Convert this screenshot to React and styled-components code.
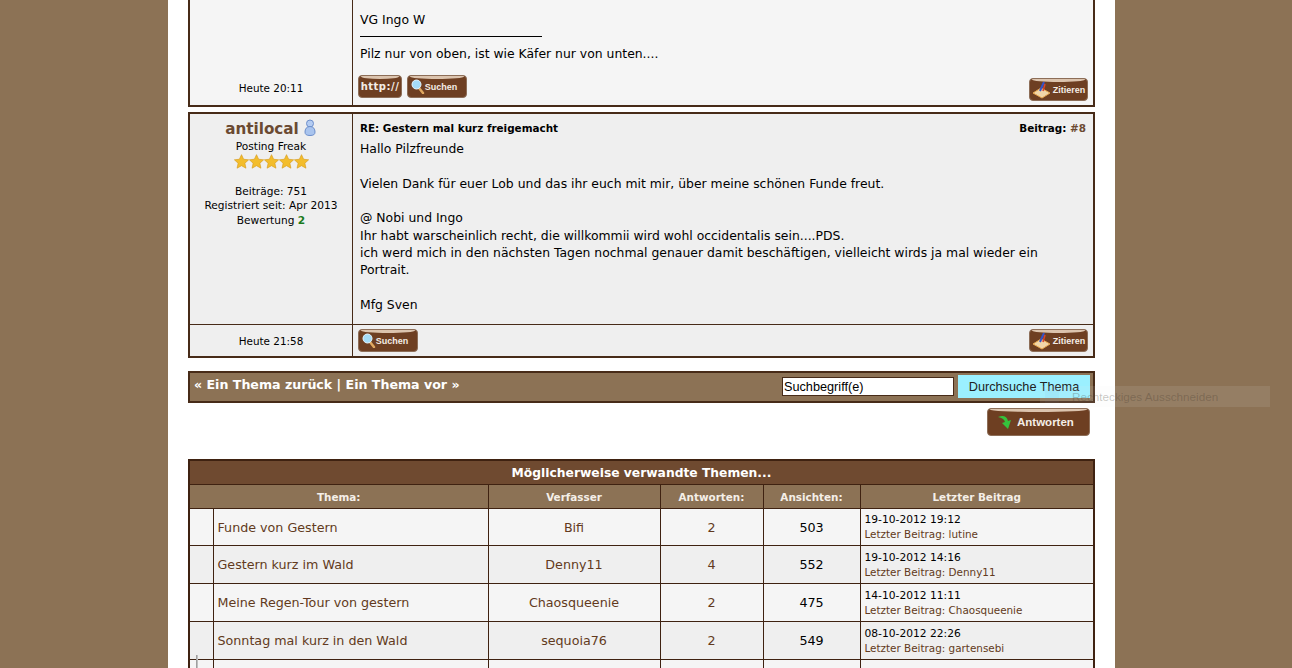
import styled, { createGlobalStyle } from "styled-components";

const threads = [
  { title: "Funde von Gestern", author: "Bifi", replies: 2, views: 503, date: "19-10-2012 19:12", last: "lutine" },
  { title: "Gestern kurz im Wald", author: "Denny11", replies: 4, views: 552, date: "19-10-2012 14:16", last: "Denny11" },
  { title: "Meine Regen-Tour von gestern", author: "Chaosqueenie", replies: 2, views: 475, date: "14-10-2012 11:11", last: "Chaosqueenie" },
  { title: "Sonntag mal kurz in den Wald", author: "sequoia76", replies: 2, views: 549, date: "08-10-2012 22:26", last: "gartensebi" },
  { title: "", author: "", replies: "", views: "", date: "", last: "" },
];

const Star = () => (
  <svg width="15" height="15" viewBox="0 0 24 24">
    <path d="M12 1l3.4 7.4 8 .9-6 5.4 1.7 8L12 18.7 4.900 22.700l1.700-8-6-5.400 8-.9z" fill="#f3bd2c" stroke="#d79a1a" strokeWidth="1" />
  </svg>
);

const UserIcon = () => (
  <svg width="14" height="17" viewBox="0 0 14 17">
    <circle cx="7" cy="4.500" r="3.500" fill="#b4ccf2" stroke="#6d8fcb" />
    <path d="M2 13c0-3 1.500-5.500 5-5.500s5 2.500 5 5.500c0 2.500-1.500 3.500-5 3.500S2 15.500 2 13z" fill="#a9c4ee" stroke="#6d8fcb" />
  </svg>
);

const Magnifier = () => (
  <svg width="14" height="15" viewBox="0 0 14 15">
    <path d="M8 9l4 5" stroke="#e0a860" strokeWidth="2.500" strokeLinecap="round" />
    <circle cx="5.500" cy="5.500" r="4.500" fill="#a5dcf7" stroke="#e6f6ff" />
  </svg>
);

const QuoteIcon = () => (
  <svg width="20" height="20" viewBox="0 0 20 20">
    <path d="M1 13l8-5 9 5-8 5z" fill="#f2d6a8" stroke="#e8a850" />
    <path d="M8 11l4-9" stroke="#3552c8" strokeWidth="2" />
    <path d="M11 11l2-7" stroke="#d8452c" strokeWidth="1.500" />
  </svg>
);

const ReplyArrow = () => (
  <svg width="18" height="16" viewBox="0 0 18 16">
    <path d="M1 3c5-2 9-1 10 4l3-1-3 9-6-6 3-1c-1-3-3-4-7-5z" fill="#35c23c" />
  </svg>
);

const App = () => {
  return (
    <Viewport>
      <GlobalStyle />
      <Page>
        <FirstPost>
          <AuthorColumn>
            <PostTime>Heute 20:11</PostTime>
          </AuthorColumn>
          <FirstMessage>
            <MessageText>VG Ingo W</MessageText>
            <Signature />
            <MessageText>Pilz nur von oben, ist wie Käfer nur von unten....</MessageText>
            <ButtonRow>
              <ButtonGroup>
                <PostButton $width={44}>
                  <HttpLabel>http://</HttpLabel>
                </PostButton>
                <SearchPostButton>
                  <Magnifier />
                  Suchen
                </SearchPostButton>
              </ButtonGroup>
              <PostButton $width={59}>
                <QuoteIcon />
                Zitieren
              </PostButton>
            </ButtonRow>
          </FirstMessage>
        </FirstPost>

        <Post>
          <AuthorColumn>
            <AuthorName>
              antilocal <UserIcon />
            </AuthorName>
            <SmallLine>Posting Freak</SmallLine>
            <Stars>
              <Star />
              <Star />
              <Star />
              <Star />
              <Star />
            </Stars>
            <AuthorStats>
              <SmallLine>Beiträge: 751</SmallLine>
              <SmallLine>Registriert seit: Apr 2013</SmallLine>
              <SmallLine>
                Bewertung <Rating>2</Rating>
              </SmallLine>
            </AuthorStats>
          </AuthorColumn>
          <Message>
            <MessageHead>
              <span>RE: Gestern mal kurz freigemacht</span>
              <span>
                Beitrag: <PostNumber>#8</PostNumber>
              </span>
            </MessageHead>
            <MessageText>
              Hallo Pilzfreunde
              <br />
              <br />
              Vielen Dank für euer Lob und das ihr euch mit mir, über meine schönen Funde freut.
              <br />
              <br />
              @ Nobi und Ingo
              <br />
              Ihr habt warscheinlich recht, die willkommii wird wohl occidentalis sein....PDS.
              <br />
              ich werd mich in den nächsten Tagen nochmal genauer damit beschäftigen, vielleicht wirds ja mal wieder ein
              <br />
              Portrait.
              <br />
              <br />
              Mfg Sven
            </MessageText>
          </Message>
          <FooterTime>
            <PostTime>Heute 21:58</PostTime>
          </FooterTime>
          <FooterButtons>
            <SearchPostButton>
              <Magnifier />
              Suchen
            </SearchPostButton>
            <PostButton $width={59}>
              <QuoteIcon />
              Zitieren
            </PostButton>
          </FooterButtons>
        </Post>

        <NavBar>
          <NavLinks>« Ein Thema zurück | Ein Thema vor »</NavLinks>
          <SearchForm>
            <SearchInput defaultValue="Suchbegriff(e)" />
            <SearchButton>Durchsuche Thema</SearchButton>
          </SearchForm>
        </NavBar>

        <ReplyRow>
          <ReplyButton>
            <ReplyArrow />
            Antworten
          </ReplyButton>
        </ReplyRow>

        <ThreadTable>
          <colgroup>
            <col style={{ width: 24 }} />
            <col style={{ width: 275 }} />
            <col style={{ width: 172 }} />
            <col style={{ width: 103 }} />
            <col style={{ width: 97 }} />
            <col />
          </colgroup>
          <thead>
            <tr>
              <TableTitle colSpan={6}>Möglicherweise verwandte Themen...</TableTitle>
            </tr>
            <tr>
              <ColumnHead colSpan={2}>Thema:</ColumnHead>
              <ColumnHead>Verfasser</ColumnHead>
              <ColumnHead>Antworten:</ColumnHead>
              <ColumnHead>Ansichten:</ColumnHead>
              <ColumnHead>Letzter Beitrag</ColumnHead>
            </tr>
          </thead>
          <tbody>
            {threads.map((thread, index) => (
              <ThreadRow key={index} $alt={index % 2 === 1}>
                <td />
                <TitleCell>{thread.title}</TitleCell>
                <LinkCell>{thread.author}</LinkCell>
                <LinkCell>{thread.replies}</LinkCell>
                <ViewsCell>{thread.views}</ViewsCell>
                <LastCell>
                  {thread.date}
                  {thread.last && (
                    <LastBy>
                      Letzter Beitrag: {thread.last}
                    </LastBy>
                  )}
                </LastCell>
              </ThreadRow>
            ))}
          </tbody>
        </ThreadTable>
      </Page>
      <GhostHint>Rechteckiges Ausschneiden</GhostHint>
      <CursorMark />
    </Viewport>
  );
};

export default App;

const GlobalStyle = createGlobalStyle`
  body {
    margin: 0;
    background: #8c7255;
    font-family: "DejaVu Sans", Verdana, sans-serif;
    color: #000;
  }
`;

const Viewport = styled.div`
  position: relative;
  height: 668px;
  overflow: hidden;
`;

const Page = styled.div`
  width: 907px;
  margin-left: 168px;
  padding: 0 20px;
  background: #fff;
  height: 668px;
  overflow: hidden;
`;

const Post = styled.div`
  display: grid;
  grid-template-columns: 163px 1fr;
  grid-template-rows: 210px 32px;
  border: 2px solid #472b18;
  background: #efefef;
`;

const FirstPost = styled.div`
  display: grid;
  grid-template-columns: 163px 1fr;
  height: 105px;
  margin-bottom: 5px;
  border: 2px solid #472b18;
  border-top: 0;
  background: #f5f5f5;
`;

const AuthorColumn = styled.div`
  display: flex;
  flex-direction: column;
  align-items: center;
  justify-content: flex-end;
  padding-bottom: 10px;
  border-right: 1px solid #472b18;
  font-size: 10px;

  ${Post} & {
    justify-content: flex-start;
    padding: 5px 0 0;
  }
`;

const PostTime = styled.div`
  font-size: 10.400px;
  line-height: 14px;
`;

const FirstMessage = styled.div`
  display: flex;
  flex-direction: column;
  padding: 11px 5px 4px 7px;
`;

const MessageText = styled.div`
  font-size: 12.400px;
  line-height: 17.330px;
`;

const Signature = styled.div`
  width: 182px;
  height: 1px;
  margin: 8px 0;
  background: #000;
`;

const ButtonRow = styled.div`
  display: flex;
  justify-content: space-between;
  align-items: flex-end;
  margin-top: auto;
  margin-left: -2px;
`;

const ButtonGroup = styled.div`
  display: flex;
  align-items: flex-end;
  gap: 5px;
  margin-bottom: 3px;
`;

const PostButton = styled.div`
  position: relative;
  display: flex;
  align-items: center;
  justify-content: center;
  gap: 1px;
  box-sizing: border-box;
  width: ${(props) => props.$width}px;
  height: 23px;
  border: 1px solid #8d6e58;
  border-radius: 4px;
  background: #6e3f22;
  color: #f4ede6;
  font-family: "Liberation Sans", Arial, sans-serif;
  font-size: 9px;
  font-weight: 700;
  overflow: hidden;

  &::before {
    content: "";
    position: absolute;
    top: 0;
    left: 2px;
    right: 2px;
    height: 3px;
    border-radius: 0 0 60% 60% / 0 0 100% 100%;
    background: #dcc4ae;
  }
`;

const SearchPostButton = styled(PostButton)`
  width: 60px;
  gap: 0;
  padding-right: 6px;
`;

const HttpLabel = styled.span`
  font-family: "DejaVu Sans", Verdana, sans-serif;
  font-size: 10px;
  font-weight: 700;
  letter-spacing: 0.5px;
`;

const AuthorName = styled.div`
  display: flex;
  align-items: center;
  gap: 4px;
  height: 20px;
  font-size: 15.200px;
  font-weight: 700;
  color: #6b4a32;

  svg {
    margin-top: -3px;
  }
`;

const SmallLine = styled.div`
  font-size: 10.600px;
  line-height: 14.600px;
  text-align: center;
`;

const Stars = styled.div`
  display: flex;
  height: 16px;
`;

const AuthorStats = styled.div`
  margin-top: 14px;
`;

const Rating = styled.strong`
  color: #1a7a1a;
`;

const Message = styled.div`
  padding: 7px 5px 0 7px;
`;

const MessageHead = styled.div`
  display: flex;
  justify-content: space-between;
  margin-bottom: 5px;
  padding-right: 2px;
  font-size: 10.400px;
  font-weight: 700;
  line-height: 14px;
`;

const PostNumber = styled.span`
  color: #6b4a32;
`;

const FooterTime = styled.div`
  display: flex;
  align-items: center;
  justify-content: center;
  border-top: 1px solid #472b18;
  border-right: 1px solid #472b18;
`;

const FooterButtons = styled.div`
  display: flex;
  align-items: center;
  justify-content: space-between;
  padding: 0 5px;
  border-top: 1px solid #472b18;
`;

const NavBar = styled.div`
  display: flex;
  align-items: center;
  justify-content: space-between;
  box-sizing: border-box;
  height: 32px;
  margin-top: 13px;
  padding: 0 3px 0 4px;
  border: 2px solid #472b18;
  background: #8c7255;
`;

const NavLinks = styled.div`
  margin-top: -5px;
  color: #fff;
  font-size: 12.600px;
  font-weight: 700;
`;

const SearchForm = styled.div`
  display: flex;
  align-items: center;
  gap: 4px;
  margin-top: -1px;
`;

const SearchInput = styled.input`
  box-sizing: border-box;
  width: 172px;
  height: 19px;
  padding: 0 1px;
  border: 1px solid #472b18;
  background: #fff;
  color: #000;
  font-family: "Liberation Sans", Arial, sans-serif;
  font-size: 12.700px;
`;

const SearchButton = styled.button`
  width: 132px;
  height: 23px;
  padding: 0;
  border: 0;
  background: #9bf0ff;
  color: #222;
  font-family: "Liberation Sans", Arial, sans-serif;
  font-size: 12.700px;
`;

const ReplyRow = styled.div`
  display: flex;
  justify-content: flex-end;
  height: 56px;
  padding: 5px 5px 0 0;
  box-sizing: border-box;
`;

const ReplyButton = styled(PostButton)`
  justify-content: flex-start;
  width: 103px;
  height: 28px;
  gap: 2px;
  padding-left: 9px;
  font-size: 11.500px;
`;

const ThreadTable = styled.table`
  width: 907px;
  table-layout: fixed;
  border-collapse: collapse;
  border: 2px solid #3f2211;
`;

const TableTitle = styled.th`
  height: 23px;
  padding: 0;
  background: #6f4a30;
  color: #fff;
  font-size: 12.300px;
  font-weight: 700;
  border-bottom: 1px solid #3f2211;
`;

const ColumnHead = styled.th`
  height: 23px;
  padding: 0;
  background: #8c7255;
  color: #f5efe8;
  font-size: 10.400px;
  font-weight: 700;
  border: 1px solid #3f2211;
`;

const ThreadRow = styled.tr`
  height: 38px;
  background: ${(props) => (props.$alt ? "#efefef" : "#f5f5f5")};

  &:first-child {
    height: 37px;
  }

  td {
    padding: 0;
    border: 1px solid #3f2211;
  }
`;

const TitleCell = styled.td`
  && {
    padding-left: 4px;
  }
  color: #623a20;
  font-size: 12.700px;
`;

const LinkCell = styled.td`
  color: #623a20;
  font-size: 12.700px;
  text-align: center;
`;

const ViewsCell = styled.td`
  font-size: 12.700px;
  text-align: center;
`;

const LastCell = styled.td`
  && {
    padding-left: 4px;
  }
  font-size: 10.700px;
  line-height: 15px;
`;

const LastBy = styled.div`
  color: #623a20;
  font-size: 10.400px;
`;

const GhostHint = styled.div`
  position: absolute;
  left: 1040px;
  top: 386px;
  box-sizing: border-box;
  width: 230px;
  height: 21px;
  padding-left: 32px;
  background: rgba(240, 240, 240, 0.1);
  color: rgba(60, 50, 40, 0.28);
  font-family: "Liberation Sans", Arial, sans-serif;
  font-size: 11.700px;
  line-height: 21px;

  &::before {
    content: "";
    position: absolute;
    left: 5px;
    top: 3px;
    width: 14px;
    height: 14px;
    background: rgba(120, 140, 190, 0.06);
  }
`;

const CursorMark = styled.div`
  position: absolute;
  left: 196px;
  top: 655px;
  width: 2px;
  height: 13px;
  background: linear-gradient(to right, #8f8f8f, #cfcfcf);
`;
